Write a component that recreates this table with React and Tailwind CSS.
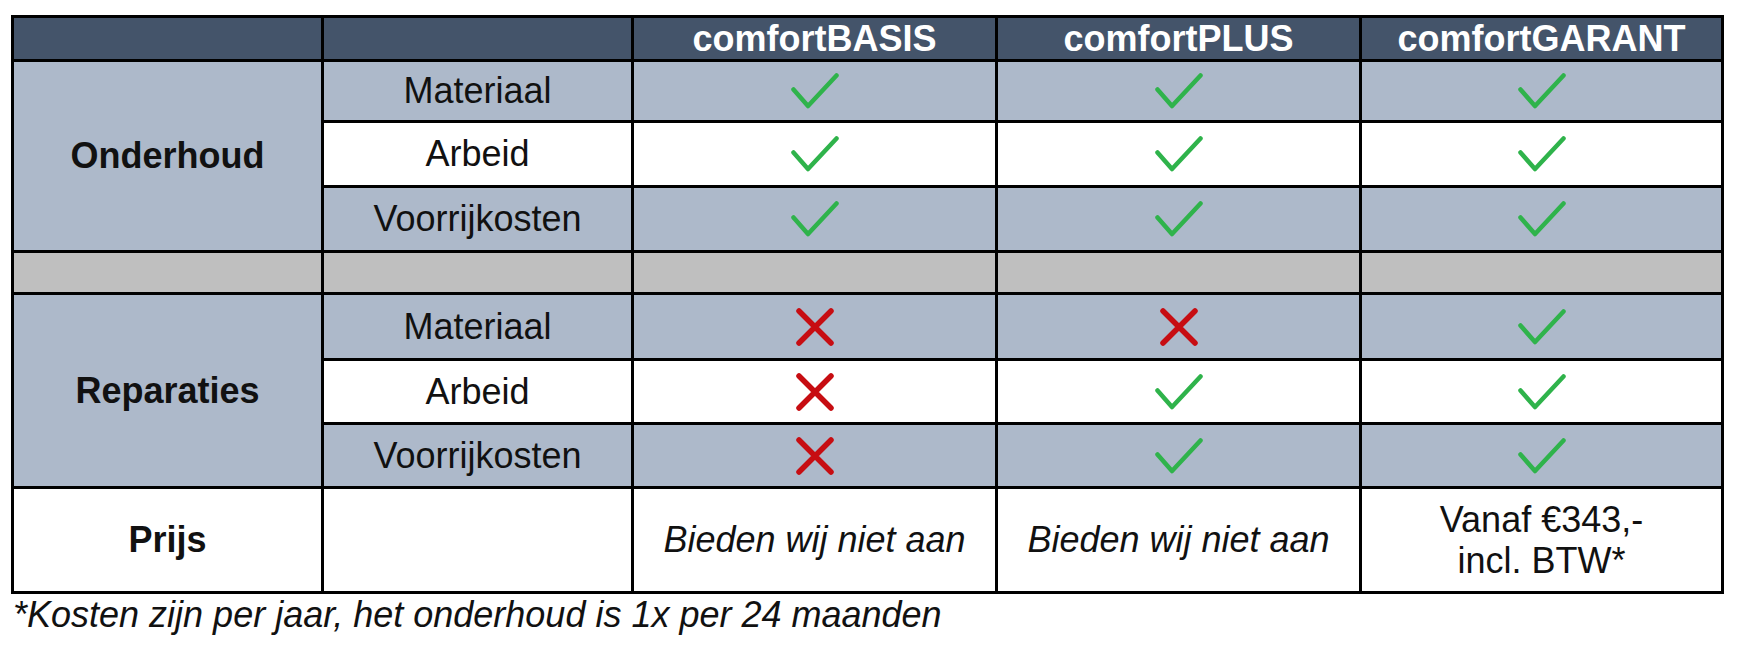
import React from "react";

const Check = () => (
  <svg width="48" height="36" viewBox="0 0 48 36" className="mx-auto block">
    <path
      d="M2.5 16.5 L17 33 L45.5 2.5"
      fill="none"
      stroke="#2fb34b"
      strokeWidth="4.5"
      strokeLinecap="round"
      strokeLinejoin="round"
    />
  </svg>
);

const Cross = () => (
  <svg width="38" height="38" viewBox="0 0 38 38" className="mx-auto block">
    <path
      d="M3 3 L35 35 M35 3 L3 35"
      fill="none"
      stroke="#c70d12"
      strokeWidth="5.5"
      strokeLinecap="round"
    />
  </svg>
);

const Mark = ({ ok }) => (ok ? <Check /> : <Cross />);

const cell = "border-[3px] border-black p-0 text-center align-middle";

const groups = [
  {
    name: "Onderhoud",
    rows: [
      { label: "Materiaal", h: "h-[61px]", bg: "bg-[#adb9ca]", v: [1, 1, 1] },
      { label: "Arbeid", h: "h-[65px]", bg: "bg-white", v: [1, 1, 1] },
      { label: "Voorrijkosten", h: "h-[65px]", bg: "bg-[#adb9ca]", v: [1, 1, 1] },
    ],
  },
  {
    name: "Reparaties",
    rows: [
      { label: "Materiaal", h: "h-[66px]", bg: "bg-[#adb9ca]", v: [0, 0, 1] },
      { label: "Arbeid", h: "h-[64px]", bg: "bg-white", v: [0, 1, 1] },
      { label: "Voorrijkosten", h: "h-[64px]", bg: "bg-[#adb9ca]", v: [0, 1, 1] },
    ],
  },
];

function Group({ g }) {
  return (
    <>
      {g.rows.map((r, i) => (
        <tr key={r.label} className={r.h}>
          {i === 0 && (
            <td rowSpan={3} className={`${cell} bg-[#adb9ca] font-bold`}>
              {g.name}
            </td>
          )}
          <td className={`${cell} ${r.bg}`}>{r.label}</td>
          {r.v.map((ok, j) => (
            <td key={j} className={`${cell} ${r.bg}`}>
              <Mark ok={ok} />
            </td>
          ))}
        </tr>
      ))}
    </>
  );
}

export default function App() {
  return (
    <div className="w-[1755px] h-[645px] bg-white font-['Liberation_Sans',Arial,sans-serif] text-[36px] leading-none text-[#111] pl-[11px] pt-[15px]">
      <table className="border-collapse table-fixed w-[1710px]">
        <colgroup>
          <col className="w-[310px]" />
          <col className="w-[310px]" />
          <col className="w-[364px]" />
          <col className="w-[364px]" />
          <col className="w-[362px]" />
        </colgroup>
        <thead>
          <tr className="h-[44px] bg-[#44546a] text-white font-bold">
            <td className={cell}></td>
            <td className={cell}></td>
            <td className={cell}>comfortBASIS</td>
            <td className={cell}>comfortPLUS</td>
            <td className={cell}>comfortGARANT</td>
          </tr>
        </thead>
        <tbody>
          <Group g={groups[0]} />
          <tr className="h-[42px] bg-[#bfbfbf]">
            <td className={cell}></td>
            <td className={cell}></td>
            <td className={cell}></td>
            <td className={cell}></td>
            <td className={cell}></td>
          </tr>
          <Group g={groups[1]} />
          <tr className="h-[105px] bg-white">
            <td className={`${cell} font-bold`}>Prijs</td>
            <td className={cell}></td>
            <td className={`${cell} italic`}>Bieden wij niet aan</td>
            <td className={`${cell} italic`}>Bieden wij niet aan</td>
            <td className={`${cell} leading-[41px]`}>
              Vanaf €343,-
              <br />
              incl. BTW*
            </td>
          </tr>
        </tbody>
      </table>
      <p className="mt-[3px] pl-[2px] italic">
        *Kosten zijn per jaar, het onderhoud is 1x per 24 maanden
      </p>
    </div>
  );
}
